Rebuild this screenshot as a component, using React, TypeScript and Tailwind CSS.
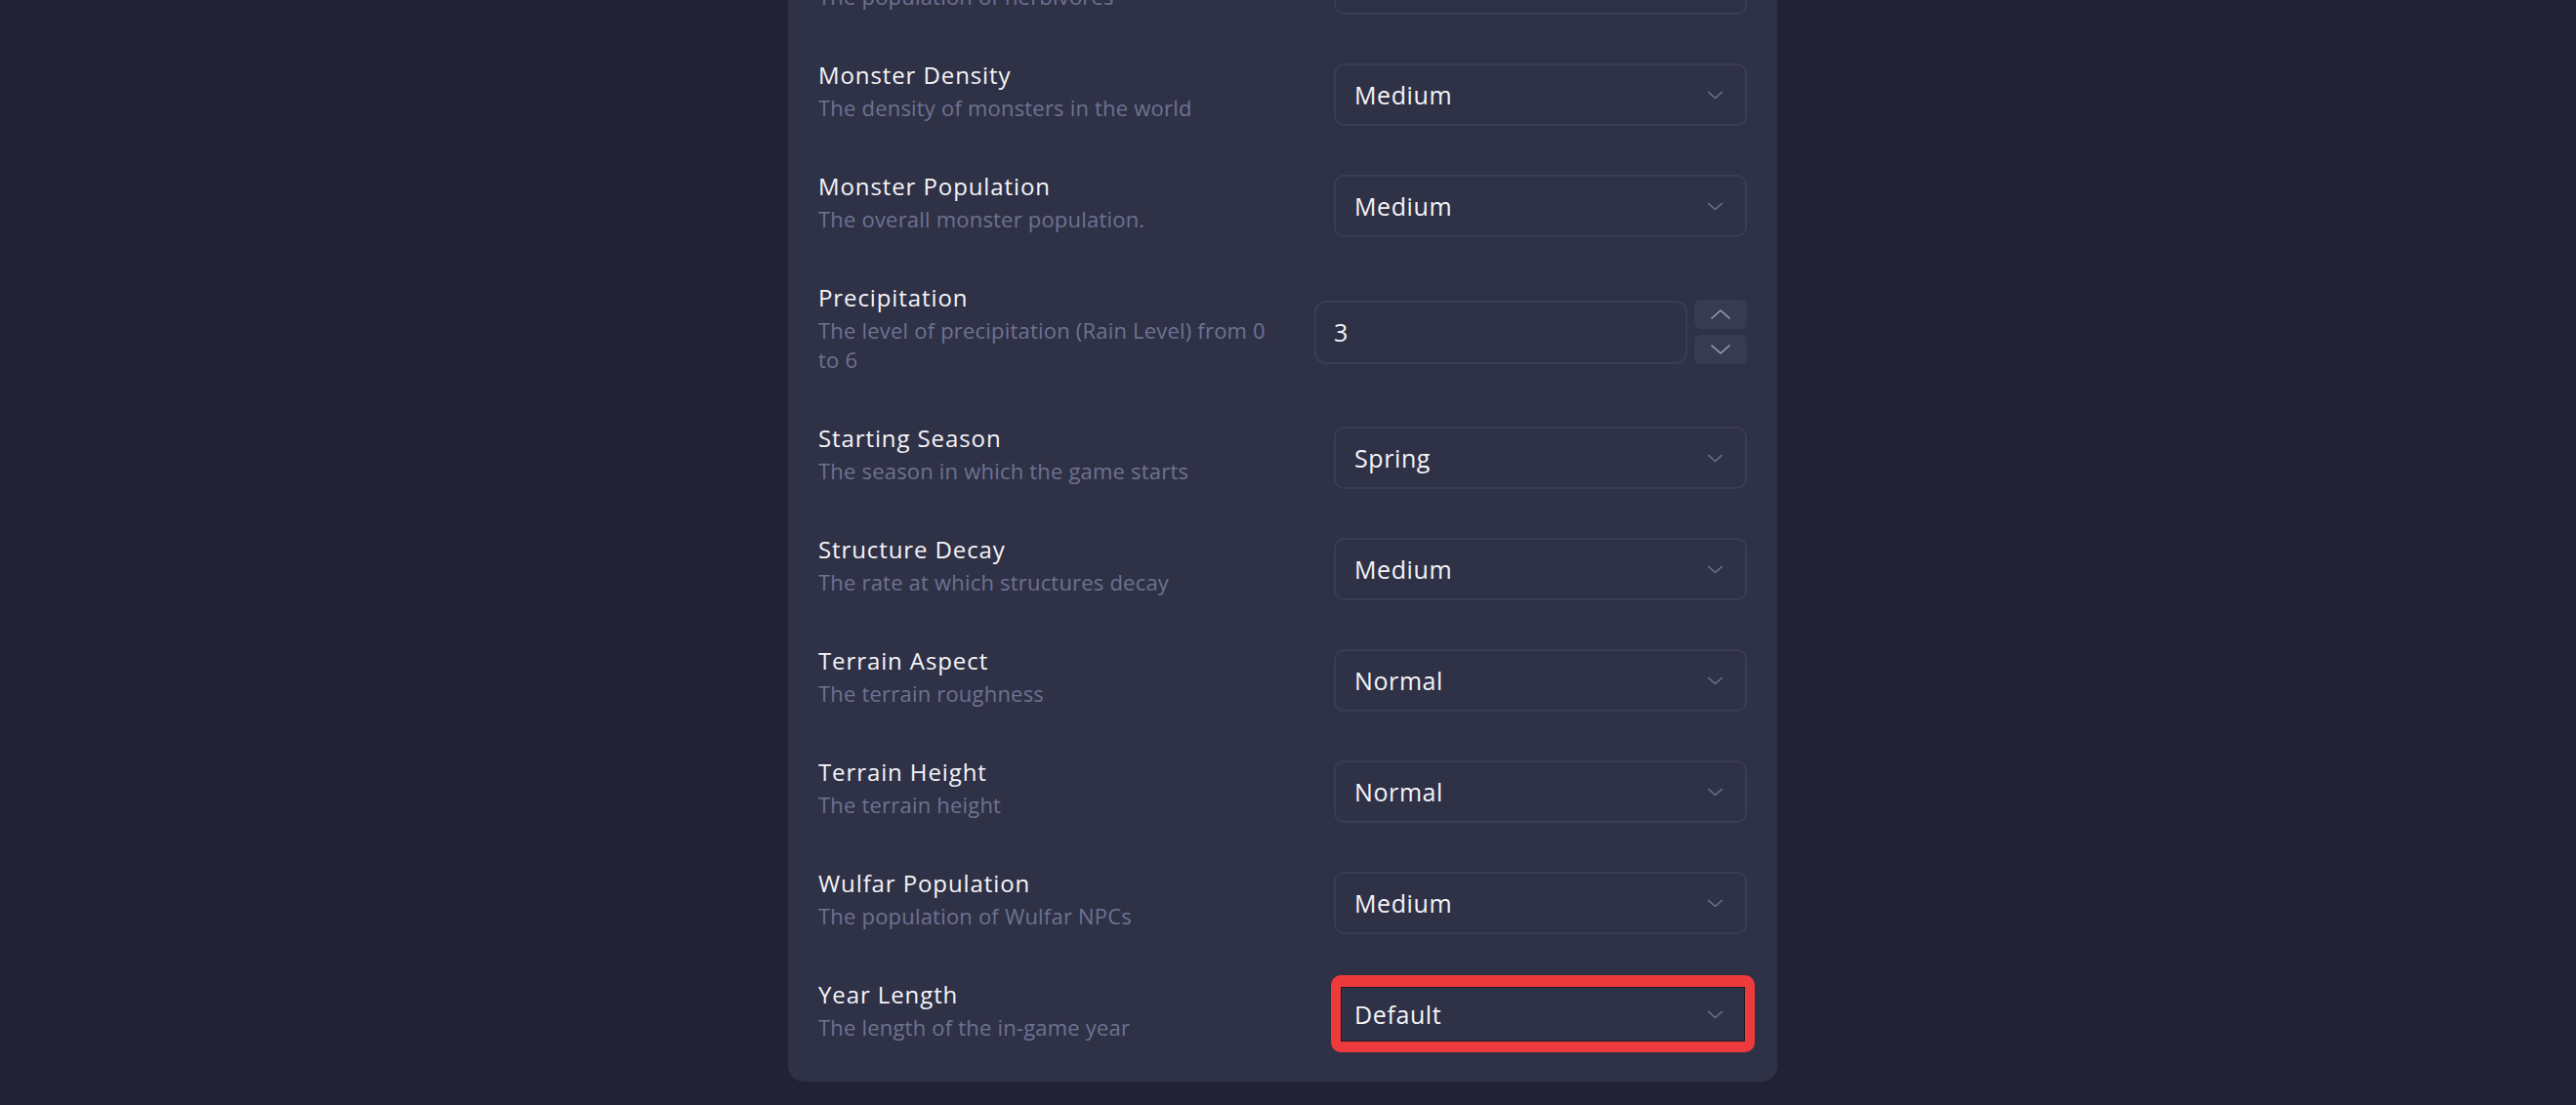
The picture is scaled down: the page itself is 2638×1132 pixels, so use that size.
type Row = {
  title: string;
  description: string;
  value: string;
  kind?: 'select' | 'number';
  highlighted?: boolean;
};

const ROWS: Row[] = [
  { title: 'Herbivore Population', description: 'The population of herbivores', value: 'Medium' },
  { title: 'Monster Density', description: 'The density of monsters in the world', value: 'Medium' },
  { title: 'Monster Population', description: 'The overall monster population.', value: 'Medium' },
  {
    title: 'Precipitation',
    description: 'The level of precipitation (Rain Level) from 0\nto 6',
    value: '3',
    kind: 'number',
  },
  { title: 'Starting Season', description: 'The season in which the game starts', value: 'Spring' },
  { title: 'Structure Decay', description: 'The rate at which structures decay', value: 'Medium' },
  { title: 'Terrain Aspect', description: 'The terrain roughness', value: 'Normal' },
  { title: 'Terrain Height', description: 'The terrain height', value: 'Normal' },
  { title: 'Wulfar Population', description: 'The population of Wulfar NPCs', value: 'Medium' },
  { title: 'Year Length', description: 'The length of the in-game year', value: 'Default', highlighted: true },
];

const Chevron = ({ up = false, className = '' }: { up?: boolean; className?: string }) => (
  <svg viewBox="0 0 20 10" className={className} fill="none" stroke="currentColor" strokeLinecap="round" strokeLinejoin="round">
    <path d={up ? 'M1 9 L10 1 L19 9' : 'M1 1 L10 9 L19 1'} />
  </svg>
);

const SelectBox = ({ value, highlighted }: { value: string; highlighted?: boolean }) => (
  <div className="relative w-[423px] flex-shrink-0">
    <div className="flex h-[64px] items-center justify-between rounded-[10px] border-2 border-[#3a3d53] bg-[#2f3146] pl-[19px] pr-[23px]">
      <span className="text-[25px] font-medium leading-none tracking-[0.6px] text-[#f4f4f8]">{value}</span>
      <Chevron className="h-[9px] w-[15px] stroke-[2.2] text-[#6c7090]" />
    </div>
    {highlighted && (
      <div className="pointer-events-none absolute -bottom-[7px] -left-[3px] -right-[8px] -top-[8px] rounded-[10px] border-x-[10px] border-t-[12px] border-b-[11px] border-[#ee3a3d] shadow-[inset_0_0_0_1px_#1b1c28]" />
    )}
  </div>
);

const NumberBox = ({ value }: { value: string }) => (
  <div className="flex w-[443px] flex-shrink-0 items-center gap-[7px]">
    <div className="flex h-[65px] flex-1 items-center rounded-[12px] border-2 border-[#3a3d53] bg-[#2f3146] px-[18px]">
      <span className="text-[25px] font-medium leading-none text-[#f4f4f8]">{value}</span>
    </div>
    <div className="flex w-[54px] flex-col gap-[6px]">
      <button className="flex h-[30px] items-center justify-center rounded-[6px] bg-[#383b50]">
        <Chevron up className="h-[10px] w-[20px] stroke-[1.6] text-[#9a9db4]" />
      </button>
      <button className="flex h-[30px] items-center justify-center rounded-[6px] bg-[#383b50]">
        <Chevron className="h-[10px] w-[20px] stroke-[1.6] text-[#9a9db4]" />
      </button>
    </div>
  </div>
);

export default function App() {
  return (
    <div className="flex h-[1132px] justify-center overflow-hidden bg-[#212335] pr-[11px] font-['Open_Sans',sans-serif]">
      <div className="-mt-[82px] h-fit w-[1013px] rounded-b-[16px] bg-[#2f3146] pb-[36px] pl-[31px] pr-[31px] pt-[32px]">
        <div className="flex flex-col gap-[48px]">
          {ROWS.map((row) => (
            <div key={row.title} className="flex items-center gap-[32px]">
              <div className="min-w-0 flex-1 pb-[5px]">
                <div className="text-[24px] leading-[26px] tracking-[0.9px] text-[#f4f4f8]">{row.title}</div>
                <div className="mt-[5px] whitespace-pre-line text-[22px] leading-[30px] tracking-[0.2px] text-[#6e7291]">
                  {row.description}
                </div>
              </div>
              {row.kind === 'number' ? (
                <NumberBox value={row.value} />
              ) : (
                <SelectBox value={row.value} highlighted={row.highlighted} />
              )}
            </div>
          ))}
        </div>
      </div>
    </div>
  );
}
